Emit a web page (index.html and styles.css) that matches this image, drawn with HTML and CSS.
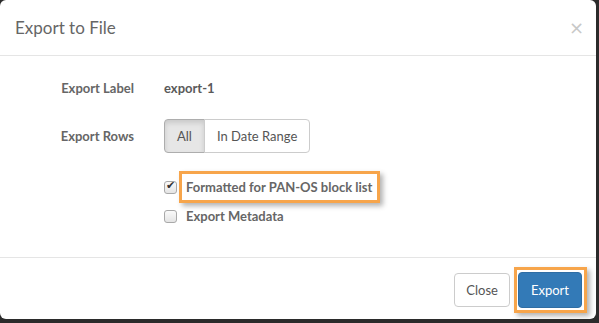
FILE: index.html
```html
<!DOCTYPE html>
<html lang="en">
<head>
    <meta charset="UTF-8">
    <title>Export to File</title>
    <link rel="stylesheet" href="styles.css">
</head>
<body>

    <div class="modal">
        <div class="modal-header">
            <h4 class="modal-title">Export to File</h4>
            <button class="close" type="button">&times;</button>
        </div>

        <div class="modal-body">
            <div class="form-row">
                <div class="form-label">Export Label</div>
                <div class="form-static">export-1</div>
            </div>

            <div class="form-row">
                <div class="form-label">Export Rows</div>
                <div class="btn-group">
                    <button class="btn active" type="button">All</button>
                    <button class="btn" type="button">In Date Range</button>
                </div>
            </div>

            <div class="check-row">
                <input type="checkbox" class="check" checked>
                <span class="check-text highlight">Formatted for PAN-OS block list</span>
            </div>
            <div class="check-row">
                <input type="checkbox" class="check">
                <span class="check-text">Export Metadata</span>
            </div>
        </div>

        <div class="modal-footer">
            <button class="btn" type="button">Close</button>
            <div class="highlight-wrap">
                <button class="btn btn-primary" type="button">Export</button>
            </div>
        </div>
    </div>

</body>
</html>
```

FILE: styles.css
```css
body {
    margin: 0;
    background-color: #2b2b2b;
    font-family: 'Lato', 'Open Sans', sans-serif;
    font-size: 13px;
    color: #5a5a5a;
}
.modal {
    width: 596px;
    background-color: #fff;
    border-radius: 6px;
    overflow: hidden;
}
.modal-header {
    display: flex;
    justify-content: space-between;
    align-items: center;
    padding: 15px;
    border-bottom: 1px solid #e5e5e5;
}
.modal-title {
    margin: 0;
    font-size: 17px;
    line-height: 25px;
    font-weight: normal;
    color: #666;
}
.close {
    border: none;
    background: none;
    padding: 0;
    margin-right: -3px;
    font-family: 'DejaVu Sans', sans-serif;
    font-size: 18px;
    line-height: 25px;
    color: #c8c8c8;
    cursor: pointer;
}
.modal-body {
    padding: 15px 15px 28px;
}
.form-row {
    display: flex;
    align-items: center;
    height: 34px;
    margin-bottom: 14px;
}
.form-row + .form-row {
    margin-bottom: 18px;
}
.form-label {
    width: 119px;
    text-align: right;
    margin-right: 30px;
    font-weight: bold;
    color: #666;
}
.form-static {
    font-weight: bold;
}
.btn-group {
    display: flex;
}
.btn {
    font-family: inherit;
    font-size: 13px;
    line-height: 20px;
    padding: 6px 11px;
    color: #555;
    background-color: #fff;
    border: 1px solid #ccc;
    border-radius: 4px;
    cursor: pointer;
}
.btn-group .btn {
    padding: 6px 12px;
}
.btn-group .btn:first-child {
    border-top-right-radius: 0;
    border-bottom-right-radius: 0;
}
.btn-group .btn + .btn {
    margin-left: -1px;
    border-top-left-radius: 0;
    border-bottom-left-radius: 0;
}
.btn.active {
    background-color: #e6e6e6;
    border-color: #adadad;
    box-shadow: inset 0 3px 5px rgba(0, 0, 0, 0.125);
}
.check-row {
    display: flex;
    align-items: center;
    margin-left: 149px;
}
.check {
    appearance: none;
    width: 13px;
    height: 13px;
    margin: 0 2px 0 0;
    border: 1px solid #a9a9a9;
    border-radius: 3px;
    background: linear-gradient(#fafafa, #e4e4e4);
    position: relative;
}
.check:checked::after {
    content: "\2714";
    position: absolute;
    left: 1px;
    top: -3px;
    font-size: 11px;
    color: #333;
}
.check-text {
    line-height: 20px;
    padding: 3px 5px 3px 7px;
    font-weight: bold;
    color: #666;
}
.check-text.highlight {
    border: 3px solid #f7a54b;
    padding-left: 4px;
    box-shadow: 3px 3px 5px rgba(0, 0, 0, 0.3);
}
.modal-footer {
    display: flex;
    justify-content: flex-end;
    align-items: center;
    gap: 4px;
    padding: 9px 9px 6px 15px;
    border-top: 1px solid #e5e5e5;
}
.highlight-wrap {
    border: 3px solid #f7a54b;
    padding: 2px 2px 2px 1px;
    box-shadow: 3px 3px 5px rgba(0, 0, 0, 0.3);
}
.btn-primary {
    color: #fff;
    background-color: #337ab7;
    border-color: #2e6da4;
    padding: 7px 12px;
}
```
